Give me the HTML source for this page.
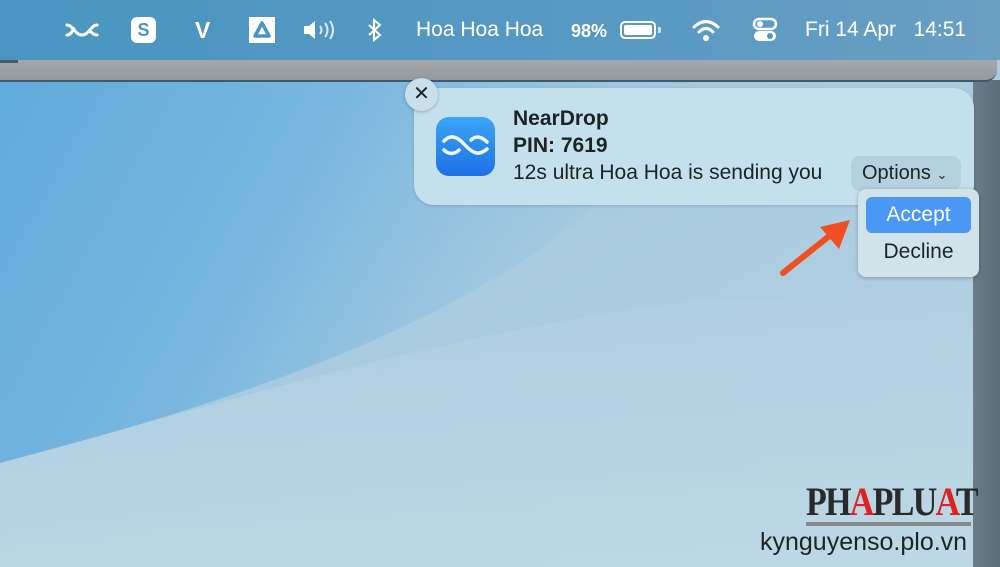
<!DOCTYPE html>
<html><head><meta charset="utf-8"><style>
*{margin:0;padding:0;box-sizing:border-box}
body{width:1000px;height:567px;overflow:hidden;position:relative;font-family:"Liberation Sans",sans-serif;background:#a9cbe0}
.abs{position:absolute}
.menu{left:0;top:0;width:1000px;height:60px;background:linear-gradient(90deg,#4a95c2,#5799c3 60%,#6a9fc2);color:#fff}
.mi{position:absolute;top:18px;font-size:21px;color:#fff;line-height:24px}
</style></head><body>
<svg class="abs" style="left:0;top:0" width="1000" height="567">
<defs>
<linearGradient id="bg" x1="0" y1="0" x2="1" y2="1"><stop offset="0" stop-color="#8fc0e0"/><stop offset="0.5" stop-color="#a9cbe0"/><stop offset="1" stop-color="#b9d3e4"/></linearGradient>
<linearGradient id="blob" x1="0" y1="0" x2="1" y2="0.3"><stop offset="0" stop-color="#5fabdc"/><stop offset="0.5" stop-color="#7cb8df"/><stop offset="1" stop-color="#a3c9df" stop-opacity="0"/></linearGradient>
<linearGradient id="low" x1="0" y1="0" x2="0" y2="1"><stop offset="0" stop-color="#b0d0e2"/><stop offset="1" stop-color="#bfdbe6"/></linearGradient>
</defs>
<rect width="1000" height="567" fill="url(#bg)"/>
<path d="M0 80 L700 80 C600 250 400 360 0 463 Z" fill="url(#blob)"/>
<path d="M0 463 C200 410 450 330 700 300 L975 300 L975 567 L0 567Z" fill="url(#low)" opacity="0.7"/>
</svg>
<div class="abs" style="left:973px;top:80px;width:27px;height:487px;background:linear-gradient(90deg,#6a7d88,#5b6d78)"></div>
<div class="abs" style="left:0;top:60px;width:997px;height:22px;background:linear-gradient(#a4a8ab,#93999d);border-radius:0 0 12px 0;border-bottom:2px solid #3f5a6c"></div>
<div class="abs" style="left:0;top:60px;width:18px;height:3px;background:#4b5a64"></div>
<div class="abs menu">
 <svg class="abs" style="left:65px;top:21px" width="34" height="18" viewBox="0 0 34 18"><path d="M2 4 C8 4 10 14 17 14 C24 14 26 4 32 4 M2 14 C6 14 7 10 9 8 M25 10 C27 12 29 14 32 14" stroke="#fff" stroke-width="3" fill="none" stroke-linecap="round"/></svg>
 <div class="abs" style="left:131px;top:17px;width:25px;height:26px;background:#fff;border-radius:6px;color:#4a95c2;font-weight:bold;font-size:18px;text-align:center;line-height:26px">S</div>
 <div class="mi" style="left:195px;font-size:23px;font-weight:bold">V</div>
 <div class="abs" style="left:249px;top:17px;width:26px;height:26px;background:#fff;"><svg width="26" height="26"><path d="M13 6 L20 19 L6 19Z" fill="none" stroke="#4a95c2" stroke-width="3.5" stroke-linejoin="round"/></svg></div>
 <svg class="abs" style="left:302px;top:18px" width="36" height="24"><path d="M2 8 H7 L13 3 V21 L7 16 H2Z" fill="#fff"/><path d="M18 8 Q21 12 18 16 M23 5 Q28 12 23 19 M28 3 Q34 12 28 21" stroke="#fff" stroke-width="2" fill="none" opacity="0.8"/></svg>
 <svg class="abs" style="left:366px;top:17px" width="18" height="26"><path d="M3 8 L14 18 L8 23 V3 L14 8 L3 18" stroke="#fff" stroke-width="2" fill="none"/></svg>
 <div class="mi" style="left:416px">Hoa Hoa Hoa</div>
 <div class="mi" style="left:571px;font-size:18px;top:19px;font-weight:bold">98%</div>
 <div class="abs" style="left:620px;top:21px;width:36px;height:18px;border:2px solid #fff;border-radius:5px;padding:2px"><div style="width:100%;height:100%;background:#fff;border-radius:2px"></div></div>
 <div class="abs" style="left:658px;top:27px;width:3px;height:6px;background:#fff;border-radius:0 2px 2px 0;opacity:.7"></div>
 <svg class="abs" style="left:692px;top:18px" width="28" height="24"><path d="M2 9 Q14 -2 26 9" stroke="#fff" stroke-width="3" fill="none" stroke-linecap="round"/><path d="M7 14 Q14 7 21 14" stroke="#fff" stroke-width="3" fill="none" stroke-linecap="round"/><circle cx="14" cy="20" r="3" fill="#fff"/></svg>
 <svg class="abs" style="left:752px;top:17px" width="26" height="26"><rect x="2" y="2" width="22" height="10" rx="5" fill="none" stroke="#fff" stroke-width="2.5"/><circle cx="8" cy="7" r="3" fill="#fff"/><rect x="2" y="14" width="22" height="10" rx="5" fill="#fff"/><circle cx="18" cy="19" r="3" fill="#4a95c2"/></svg>
 <div class="mi" style="left:805px">Fri 14 Apr&nbsp;&nbsp;&nbsp;14:51</div>
</div>
<div class="abs" style="left:414px;top:88px;width:560px;height:117px;background:#c4e0ec;border-radius:20px;box-shadow:0 1px 3px rgba(0,0,0,.15)"></div>
<div class="abs" style="left:405px;top:78px;width:33px;height:33px;border-radius:50%;background:#c9dfe9;box-shadow:0 1px 3px rgba(0,0,0,.25);text-align:center;font-size:20px;line-height:32px;color:#222">✕</div>
<div class="abs" style="left:436px;top:117px;width:59px;height:59px;border-radius:13px;background:linear-gradient(#3aa6f8,#1f6fe6)">
<svg width="59" height="59"><path d="M8 24 C14 18 20 18 29 28 C38 38 44 38 51 32 M8 33 C13 38 19 37 23 33 M35 23 C40 18 46 20 51 25" stroke="#fff" stroke-width="3.5" fill="none" stroke-linecap="round" opacity=".95"/></svg></div>
<div class="abs" style="left:513px;top:107px;font-size:21px;font-weight:bold;color:#1e2326;line-height:24px">NearDrop</div>
<div class="abs" style="left:513px;top:134px;font-size:21px;font-weight:bold;color:#1e2326;line-height:24px">PIN: 7619</div>
<div class="abs" style="left:513px;top:161px;font-size:21px;color:#1e2326;line-height:24px;width:322px;overflow:hidden;white-space:nowrap">12s ultra Hoa Hoa is sending you</div>
<div class="abs" style="left:851px;top:156px;width:110px;height:35px;background:#b5d1dd;border-radius:9px;font-size:20px;line-height:35px;padding-left:11px;color:#1e2326">Options <span style="font-size:13px">⌄</span></div>
<div class="abs" style="left:858px;top:189px;width:121px;height:88px;background:#d0e3ea;border-radius:8px;box-shadow:0 1px 4px rgba(0,0,0,.25)"></div>
<div class="abs" style="left:866px;top:197px;width:105px;height:36px;background:#4a97f5;border-radius:6px;color:#fff;font-size:21px;line-height:36px;text-align:center">Accept</div>
<div class="abs" style="left:866px;top:234px;width:105px;height:36px;color:#1e2326;font-size:21px;line-height:36px;text-align:center">Decline</div>
<svg class="abs" style="left:775px;top:215px" width="80" height="65"><path d="M8 58 L58 18" stroke="#f04e23" stroke-width="6" stroke-linecap="round"/><path d="M45 12 L75 5 L64 34Z" fill="#f04e23"/></svg>
<div class="abs" style="left:806px;top:482px;font-family:'Liberation Serif',serif;font-size:40px;font-weight:bold;color:#2a2a2a;letter-spacing:-2px;line-height:40px;transform:scaleX(0.85);transform-origin:left;white-space:nowrap">PH<span style="color:#d22">A</span>PLU<span style="color:#d22">A</span>T</div>
<div class="abs" style="left:806px;top:522px;width:165px;height:4px;background:#888"></div>
<div class="abs" style="left:760px;top:527px;font-size:25px;color:#1e2326;line-height:30px">kynguyenso.plo.vn</div>
</body></html>
